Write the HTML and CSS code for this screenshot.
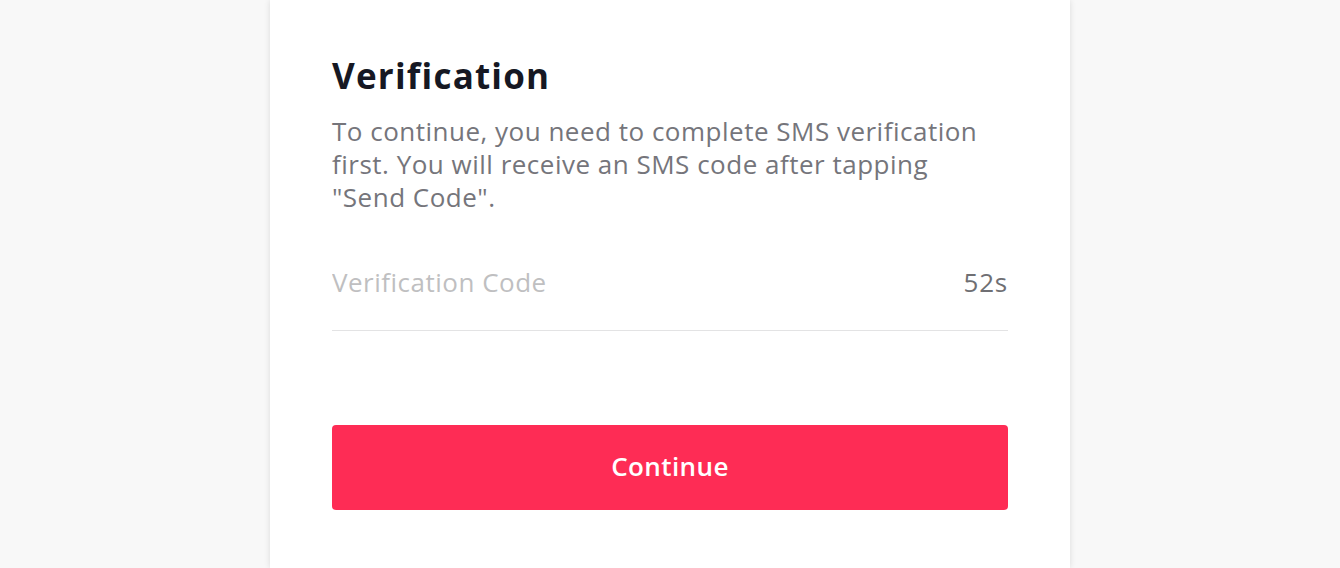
FILE: index.html
```html
<!DOCTYPE html>
<html lang="en">
<head>
<meta charset="utf-8">
<title>Verification</title>
<link rel="stylesheet" href="styles.css">
</head>
<body>
<main class="card">
  <h1 class="title">Verification</h1>
  <p class="desc">To continue, you need to complete SMS verification first. You will receive an SMS code after tapping "Send Code".</p>
  <div class="field">
    <input class="code-input" type="text" placeholder="Verification Code">
    <span class="timer">52s</span>
  </div>
  <button class="btn" type="button">Continue</button>
</main>
</body>
</html>
```
FILE: styles.css
```css
html, body {
  margin: 0;
  padding: 0;
  height: 100%;
  background: #f8f8f8;
  font-family: "Open Sans", "Lato", sans-serif;
  overflow: hidden;
}
.card {
  width: 800px;
  min-height: 100%;
  margin: 0 auto;
  background: #fff;
  box-sizing: border-box;
  padding: 52px 62px 0;
  box-shadow: 0 0 6px rgba(0,0,0,0.12);
}
.title {
  margin: 0;
  font-size: 35px;
  line-height: 48px;
  font-weight: 700;
  color: #161823;
  letter-spacing: 1.2px;
}
.desc {
  margin: 15px 0 0;
  font-size: 26px;
  line-height: 33px;
  letter-spacing: 0.5px;
  color: #75757b;
}
.field {
  display: flex;
  align-items: center;
  margin-top: 52px;
  padding-bottom: 31px;
  border-bottom: 1px solid #e3e3e4;
}
.code-input {
  flex: 1;
  min-width: 0;
  height: 33px;
  line-height: 33px;
  border: none;
  outline: none;
  padding: 0;
  font-family: inherit;
  font-size: 26px;
  letter-spacing: 0.5px;
  color: #161823;
  background: transparent;
}
.code-input::placeholder { color: #bfbfc1; }
.timer {
  font-size: 26px;
  line-height: 33px;
  letter-spacing: 0.8px;
  color: #6f6f73;
}
.btn {
  display: block;
  width: 100%;
  height: 85px;
  margin-top: 94px;
  padding: 0 0 4px;
  border: none;
  border-radius: 4px;
  background: #fe2c55;
  color: #fff;
  font-family: inherit;
  font-size: 26px;
  font-weight: 600;
  letter-spacing: 0.4px;
  cursor: pointer;
}
```
